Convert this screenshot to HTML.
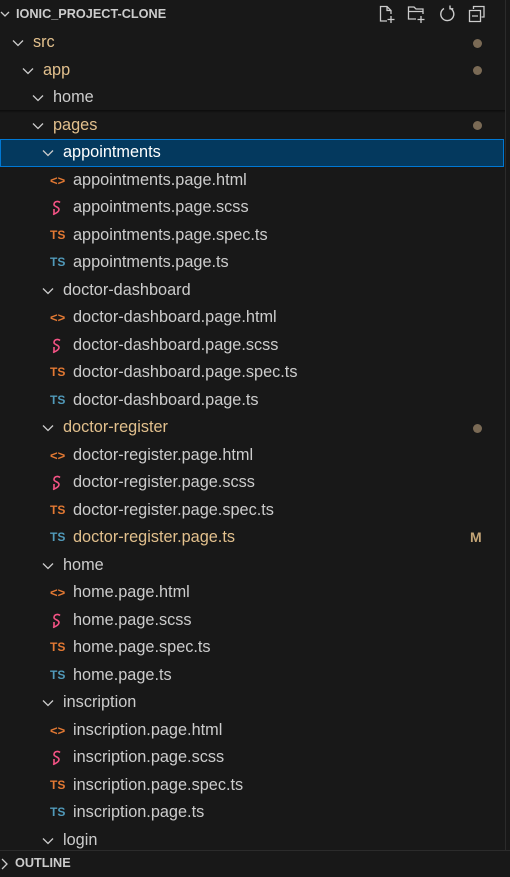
<!DOCTYPE html>
<html><head><meta charset="utf-8">
<style>
html,body{margin:0;padding:0;width:510px;height:876px;overflow:hidden;background:#181818;font-family:"Liberation Sans",sans-serif;}
.row{position:absolute;left:0;width:504px;height:27.5px;line-height:27.5px;font-size:16.3px;color:#cccccc;white-space:nowrap;}
.chev{position:absolute;top:0;width:14px;height:27.5px;}
.chev svg{position:absolute;top:9px;left:0;}
.t{position:absolute;top:0;}
.y{color:#e2c08d;}
.ic{position:absolute;top:0;font-size:12px;font-weight:bold;}
.dot{position:absolute;left:473px;top:9.5px;width:9px;height:9px;border-radius:50%;background:#7a6a55;}
.sel{background:#04395e;outline:1px solid #0078d4;outline-offset:-1px;color:#fff;}
</style></head><body>
<div style="position:absolute;left:505px;top:0;width:1px;height:850px;background:#2b2b2b"></div>
<div style="position:absolute;left:0;top:0;width:505px;height:28px;">
<svg style="position:absolute;left:0;top:9px" width="10" height="10" viewBox="0 0 10 10"><path d="M1 3 L5 7 L9 3" stroke="#ccc" stroke-width="1.3" fill="none"/></svg>
<div style="position:absolute;left:16px;top:0;line-height:28px;font-size:12.7px;font-weight:bold;color:#cccccc;">IONIC_PROJECT-CLONE</div>
<svg style="position:absolute;left:377px;top:4px" width="20" height="20" viewBox="0 0 20 20" fill="none" stroke="#ccc" stroke-width="1.3"><path d="M10 17 H3.5 V2.5 H10 L14 6.5 V10 M10 2.5 V6.5 H14 M14 12 V19 M10.5 15.5 H17.5"/></svg>
<svg style="position:absolute;left:406px;top:4px" width="22" height="20" viewBox="0 0 22 20" fill="none" stroke="#ccc" stroke-width="1.3"><path d="M10 15 H2.5 V3 H8 L10 5 H17 V10 M2.5 7.5 H17 M15 12 V19 M11.5 15.5 H18.5"/></svg>
<svg style="position:absolute;left:437px;top:4px" width="20" height="20" viewBox="0 0 20 20" fill="none" stroke="#ccc" stroke-width="1.4"><path d="M7 4.5 A6.5 6.5 0 1 0 13 4.2 M13 1.5 V4.8 H16.3"/></svg>
<svg style="position:absolute;left:467px;top:4px" width="20" height="20" viewBox="0 0 20 20" fill="none" stroke="#ccc" stroke-width="1.3"><path d="M6.5 5 V2.5 H17 V13 H14.5 M2.5 6.5 H13.5 V17.5 H2.5 Z M5 12 H11"/></svg>
</div>
<div id="tree"></div>
<div style="position:absolute;left:0;top:110px;width:505px;height:3px;background:linear-gradient(#0c0c0c,#181818)"></div>
<div style="position:absolute;left:0;top:850px;width:510px;height:26px;border-top:1px solid #2b2b2b;background:#181818;">
<svg style="position:absolute;left:0;top:7px" width="10" height="12" viewBox="0 0 10 12"><path d="M2 1 L7 6 L2 11" stroke="#ccc" stroke-width="1.3" fill="none"/></svg>
<div style="position:absolute;left:15px;top:0;line-height:25px;font-size:12.7px;font-weight:bold;color:#cccccc;">OUTLINE</div>
</div>
<script>
var items=[
[0,'f','src','y',1],[1,'f','app','y',1],[2,'f','home',''],[2,'f','pages','y',1],[3,'f','appointments','sel'],
[4,'h','appointments.page.html'],[4,'s','appointments.page.scss'],[4,'ts2','appointments.page.spec.ts'],[4,'ts','appointments.page.ts'],
[3,'f','doctor-dashboard',''],
[4,'h','doctor-dashboard.page.html'],[4,'s','doctor-dashboard.page.scss'],[4,'ts2','doctor-dashboard.page.spec.ts'],[4,'ts','doctor-dashboard.page.ts'],
[3,'f','doctor-register','y',1],
[4,'h','doctor-register.page.html'],[4,'s','doctor-register.page.scss'],[4,'ts2','doctor-register.page.spec.ts'],[4,'ts','doctor-register.page.ts','y','M'],
[3,'f','home',''],
[4,'h','home.page.html'],[4,'s','home.page.scss'],[4,'ts2','home.page.spec.ts'],[4,'ts','home.page.ts'],
[3,'f','inscription',''],
[4,'h','inscription.page.html'],[4,'s','inscription.page.scss'],[4,'ts2','inscription.page.spec.ts'],[4,'ts','inscription.page.ts'],
[3,'f','login','']
];
var h='';
items.forEach(function(it,i){
 var top=29.25+i*27.5,d=it[0],cls=it[3]||'';
 var x=12+d*10;
 var r='<div class="row '+(cls=='sel'?'sel':'')+'" style="top:'+top+'px">';
 if(it[1]=='f'){
  r+='<span class="chev" style="left:'+x+'px"><svg width="12" height="10" viewBox="0 0 12 10"><path d="M1 2.5 L6 7.5 L11 2.5" stroke="#ccc" stroke-width="1.3" fill="none"/></svg></span>';
  r+='<span class="t '+(cls=='y'?'y':'')+'" style="left:'+(x+21)+'px">'+it[2]+'</span>';
 } else {
  var ix=x-2,ic='';
  if(it[1]=='h') ic='<span class="ic" style="left:'+ix+'px;color:#e37933;font-size:13px">&lt;&gt;</span>';
  if(it[1]=='s') ic='<svg style="position:absolute;left:'+(ix+1)+'px;top:6px" width="12" height="16" viewBox="0 0 12 16"><path d="M9 2.5 C7 0.5 3 1.5 3 4.5 C3 7 8 6.5 8 9.5 C8 12.5 3 14 2 14.5 M3 9 L3 14" stroke="#f55385" stroke-width="1.6" fill="none"/></svg>';
  if(it[1]=='ts2') ic='<span class="ic" style="left:'+ix+'px;color:#e37933">TS</span>';
  if(it[1]=='ts') ic='<span class="ic" style="left:'+ix+'px;color:#519aba">TS</span>';
  r+=ic+'<span class="t '+(cls=='y'?'y':'')+'" style="left:'+(x+21)+'px">'+it[2]+'</span>';
 }
 if(it[4]===1) r+='<span class="dot"></span>';
 if(it[4]==='M') r+='<span style="position:absolute;left:470px;top:0;font-size:14px;font-weight:bold;color:#c4a576">M</span>';
 r+='</div>';
 h+=r;
});
document.getElementById('tree').innerHTML=h;
</script>
</body></html>
